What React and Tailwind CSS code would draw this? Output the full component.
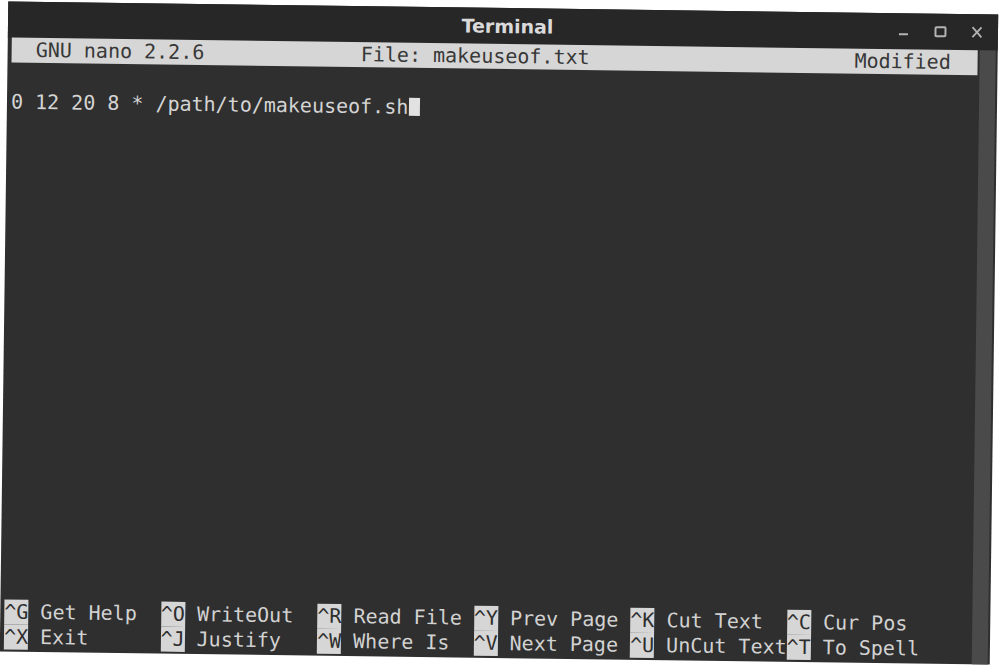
import React from "react";

const shortcuts = [
  [
    ["^G", "Get Help"],
    ["^O", "WriteOut"],
    ["^R", "Read File"],
    ["^Y", "Prev Page"],
    ["^K", "Cut Text"],
    ["^C", "Cur Pos"],
  ],
  [
    ["^X", "Exit"],
    ["^J", "Justify"],
    ["^W", "Where Is"],
    ["^V", "Next Page"],
    ["^U", "UnCut Text"],
    ["^T", "To Spell"],
  ],
];

// nano header line, 80 columns wide
const headerLine =
  "  GNU nano 2.2.6" +
  " ".repeat(13) +
  "File: makeuseof.txt" +
  " ".repeat(22) +
  "Modified  ";

const WindowControls = () => (
  <div className="flex items-center justify-end gap-[23px] pr-[14px] text-[#b4b4b4]">
    {/* minimize */}
    <svg width="14" height="14" viewBox="0 0 14 14">
      <rect x="3" y="9" width="9" height="2" fill="currentColor" />
    </svg>
    {/* maximize */}
    <svg width="14" height="14" viewBox="0 0 14 14">
      <rect x="2.5" y="2.5" width="10" height="9" rx="1" fill="none" stroke="currentColor" strokeWidth="2" />
    </svg>
    {/* close */}
    <svg width="14" height="14" viewBox="0 0 14 14">
      <path d="M2.5 2 L11.5 12 M11.5 2 L2.5 12" stroke="currentColor" strokeWidth="1.8" />
    </svg>
  </div>
);

const App = () => {
  return (
    <div className="min-h-screen w-full bg-white overflow-hidden">
      <div className="ml-[4px] mt-[8px] w-[990px] h-[650px] rotate-[0.75deg] bg-[#2f2f2f] flex flex-col font-['DejaVu_Sans_Mono',monospace] text-[20px]">
        {/* title bar */}
        <div className="h-[36px] shrink-0 bg-[#272727] grid grid-cols-[1fr_auto_1fr] items-center">
          <div />
          <div className="pl-[9px] font-['DejaVu_Sans',sans-serif] font-bold text-[19px] text-[#dadada]">
            Terminal
          </div>
          <WindowControls />
        </div>

        {/* terminal body */}
        <div className="flex flex-1 min-h-0">
          <div className="flex-1 flex flex-col pl-[4px]">
            <div className="w-[966px] h-[25px] leading-[25px] bg-[#d6d6d6] text-[#383838] whitespace-pre">
              {headerLine}
            </div>

            <div className="mt-[26px] h-[26px] leading-[26px] text-[#d4d4d4] whitespace-pre flex items-center">
              <span>0 12 20 8 * /path/to/makeuseof.sh</span>
              <span className="inline-block w-[11px] h-[18px] bg-[#e2e2e2] ml-[1px]" />
            </div>

            <div className="flex-1" />

            <div className="pb-[2px]">
              {shortcuts.map((row, i) => (
                <div key={i} className="flex h-[25px] leading-[25px] text-[#d2d2d2]">
                  {row.map(([key, label]) => (
                    <div key={key} className="w-[13ch] whitespace-pre flex">
                      <span className="bg-[#d6d6d6] text-[#2e2e2e]">{key}</span>
                      <span> {label}</span>
                    </div>
                  ))}
                </div>
              ))}
            </div>
          </div>

          {/* scrollbar */}
          <div className="w-[16px] ml-[2px] mr-[2px] bg-[#4a4a4a]" />
        </div>
      </div>
    </div>
  );
};

export default App;
